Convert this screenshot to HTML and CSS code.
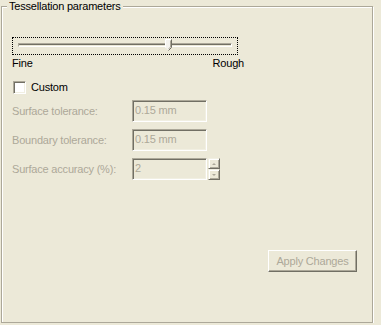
FILE: index.html
```html
<!DOCTYPE html>
<html lang="en">
<head>
  <meta charset="UTF-8" />
  <title>Tessellation parameters</title>
  <link rel="stylesheet" href="styles.css">
</head>
<body>

  <fieldset class="group">
    <legend>Tessellation parameters</legend>

    <div class="slider">
      <div class="track"></div>
      <svg class="thumb" width="7" height="12" viewBox="0 0 7 12">
        <path d="M0.5 0.5 H6.5 V8.5 L3.5 11.5 L0.5 8.5 Z" fill="#f4f3ee" stroke="none"/>
        <path d="M0.5 8.5 V0.5 H6" fill="none" stroke="#ffffff"/>
        <path d="M6.5 0.5 V8.5 L3.5 11.5" fill="none" stroke="#716f64"/>
        <path d="M5.5 1.5 V8 L3.5 10" fill="none" stroke="#aca899"/>
      </svg>
    </div>
    <div class="scale">
      <span>Fine</span>
      <span>Rough</span>
    </div>

    <label class="check">
      <span class="box"></span>
      <span>Custom</span>
    </label>

    <div class="fields">
      <span class="lbl">Surface tolerance:</span>
      <div class="input">0.15 mm</div>
      <span></span>

      <span class="lbl">Boundary tolerance:</span>
      <div class="input">0.15 mm</div>
      <span></span>

      <span class="lbl">Surface accuracy (%):</span>
      <div class="input">2</div>
      <div class="spin">
        <div class="spin-btn"><span class="arrow up"></span></div>
        <div class="spin-btn"><span class="arrow down"></span></div>
      </div>
    </div>

    <div class="actions">
      <button class="btn" disabled>Apply Changes</button>
    </div>
  </fieldset>

</body>
</html>
```

FILE: styles.css
```css
body {
  margin: 0;
  background-color: #ece9d8;
  font-family: "Liberation Sans", Arial, sans-serif;
  font-size: 11px;
  letter-spacing: -0.2px;
  color: #000;
}

.group {
  box-sizing: border-box;
  width: 372px;
  height: 323px;
  margin: 0 0 0 1px;
  padding: 0;
  border: 1px solid #aca899;
  box-shadow: inset 1px 1px 0 #fff, 1px 1px 0 #fff;
}

.group legend {
  margin-left: 5px;
  padding: 0 2px;
  line-height: 13px;
  height: 13px;
  background-color: #ece9d8;
  color: #000;
}

.slider {
  position: relative;
  box-sizing: border-box;
  width: 226px;
  height: 18px;
  margin: 24px 0 0 10px;
  border: 1px dotted #000;
}

.track {
  box-sizing: border-box;
  width: 214px;
  height: 4px;
  margin: 5px 0 0 5px;
  border-top: 1px solid #aca899;
  border-left: 1px solid #aca899;
  border-bottom: 1px solid #fff;
  border-right: 1px solid #fff;
  background-color: #ece9d8;
  box-shadow: inset 0 1px 0 #716f64;
}

.thumb {
  position: absolute;
  left: 152px;
  top: 1px;
}

.scale {
  display: flex;
  justify-content: space-between;
  width: 232px;
  margin: 2px 0 0 10px;
  line-height: 13px;
}

.check {
  display: flex;
  align-items: center;
  gap: 5px;
  margin: 11px 0 0 11px;
  line-height: 13px;
}

.box {
  box-sizing: border-box;
  width: 13px;
  height: 13px;
  background-color: #fff;
  border-top: 1px solid #aca899;
  border-left: 1px solid #aca899;
  border-bottom: 1px solid #fff;
  border-right: 1px solid #fff;
  box-shadow: inset 1px 1px 0 #716f64, inset -1px -1px 0 #f1efe2;
}

.fields {
  display: grid;
  grid-template-columns: 120px 75px 13px;
  grid-auto-rows: 22px;
  row-gap: 7px;
  align-items: center;
  margin: 6px 0 0 10px;
}

.lbl {
  color: #aca899;
}

.input {
  box-sizing: border-box;
  height: 22px;
  padding: 3px 0 0 2px;
  line-height: 13px;
  color: #aca899;
  border-top: 1px solid #aca899;
  border-left: 1px solid #aca899;
  border-bottom: 1px solid #fff;
  border-right: 1px solid #fff;
  box-shadow: inset 1px 1px 0 #716f64, inset -1px -1px 0 #f1efe2;
}

.spin {
  display: flex;
  flex-direction: column;
  height: 22px;
  margin-left: 1px;
}

.spin-btn {
  box-sizing: border-box;
  flex: 1;
  width: 12px;
  display: flex;
  align-items: center;
  justify-content: center;
  border-top: 1px solid #f1efe2;
  border-left: 1px solid #f1efe2;
  border-bottom: 1px solid #716f64;
  border-right: 1px solid #716f64;
  box-shadow: inset 1px 1px 0 #fff, inset -1px -1px 0 #aca899;
}

.arrow {
  width: 0;
  height: 0;
  border-left: 2px solid transparent;
  border-right: 2px solid transparent;
}

.arrow.up {
  border-bottom: 2px solid #aca899;
}

.arrow.down {
  border-top: 2px solid #aca899;
}

.actions {
  display: flex;
  justify-content: flex-end;
  margin: 70px 15px 0 0;
}

.btn {
  box-sizing: border-box;
  width: 89px;
  height: 22px;
  padding: 0;
  font-family: inherit;
  font-size: 11px;
  letter-spacing: inherit;
  color: #aca899;
  background-color: #ece9d8;
  border-top: 1px solid #fff;
  border-left: 1px solid #fff;
  border-bottom: 1px solid #716f64;
  border-right: 1px solid #716f64;
  box-shadow: inset -1px -1px 0 #aca899;
}
```
